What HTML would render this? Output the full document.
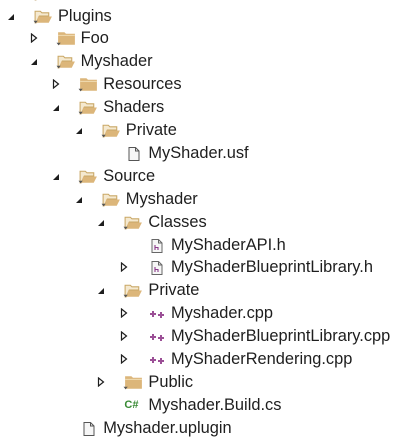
<!DOCTYPE html>
<html><head><style>
body{margin:0;width:408px;height:444px;background:#fff;position:relative;overflow:hidden;font-family:"Liberation Sans","Noto Sans CJK SC",sans-serif;font-size:16.4px;color:#1e1e1e}
.r{position:absolute;height:23px;line-height:23px;white-space:nowrap}
.r span{position:absolute;left:0}
.r svg{position:absolute}
</style></head><body>
<svg width="0" height="0" style="position:absolute">
<defs>
<symbol id="fo" viewBox="0 0 20 16"><path d="M2 3h5l1.5 1.5H15v3H6L3 14H2z" fill="#f5e9d0" stroke="#c9a765" stroke-width="1"/><path d="M5 8h13l-3 6H3z" fill="#dcb67a"/><path d="M0.5 12h4l-2 2.5z" fill="#555"/></symbol>
<symbol id="fc" viewBox="0 0 20 16"><path d="M2 2h6l1.5 1.5H18V14H2z" fill="#dcb67a"/><path d="M2 5h16" stroke="#f0dcb4" stroke-width="1"/><path d="M0.5 12h4l-2 2.5z" fill="#555"/></symbol>
<symbol id="doc" viewBox="0 0 16 16"><path d="M3 1.5h6.5l3.5 3.5v9.5H3z" fill="#f6f6f6" stroke="#555"/><path d="M9.5 1.5v3.5h3.5" fill="none" stroke="#555"/></symbol>
<symbol id="h" viewBox="0 0 16 16"><path d="M3 1.5h6.5l3.5 3.5v9.5H3z" fill="#f6f6f6" stroke="#666"/><path d="M9.5 1.5v3.5h3.5" fill="none" stroke="#666"/><path d="M6 7v5M6 9.5h3v2.5" fill="none" stroke="#8b3a8b" stroke-width="1.1"/></symbol>
<symbol id="cpp" viewBox="0 0 16 16"><path d="M1 8h6M4 5v6M9 9h6M12 6v6" stroke="#9b4f96" stroke-width="2"/></symbol>
<symbol id="ex" viewBox="0 0 8 8"><path d="M7 1V7H1z" fill="#1e1e1e"/></symbol>
<symbol id="co" viewBox="0 0 8 10"><path d="M1.5 1l5 4-5 4z" fill="#fff" stroke="#1e1e1e" stroke-width="1.2"/></symbol>
</defs></svg>
<div id="t"></div>
<script>
var rows=[
[-1,'','fo','',-1],
[0,'Plugins','fo','ex'],[1,'Foo','fc','co'],[1,'Myshader','fo','ex'],[2,'Resources','fc','co'],[2,'Shaders','fo','ex'],[3,'Private','fo','ex'],[4,'MyShader.usf','doc',''],[2,'Source','fo','ex'],[3,'Myshader','fo','ex'],[4,'Classes','fo','ex'],[5,'MyShaderAPI.h','h',''],[5,'MyShaderBlueprintLibrary.h','h','co'],[4,'Private','fo','ex'],[5,'Myshader.cpp','cpp','co'],[5,'MyShaderBlueprintLibrary.cpp','cpp','co'],[5,'MyShaderRendering.cpp','cpp','co'],[4,'Public','fc','co'],[4,'Myshader.Build.cs','cs',''],[2,'Myshader.uplugin','doc','']];
var h='';
rows.forEach(function(r,i){
 var lv=r[0]<0?0:r[0];var T=58+22.6*lv;var y=4.5+22.9*(i-1);
 h+='<div class="r" style="top:'+y+'px;left:0;width:408px">';
 if(r[3]=='ex')h+='<svg style="left:'+(T-51)+'px;top:8px" width="8" height="8"><use href="#ex"/></svg>';
 if(r[3]=='co')h+='<svg style="left:'+(T-51)+'px;top:6px" width="8" height="10"><use href="#co"/></svg>';
 if(r[2]=='cs')h+='<span style="left:'+(T-24)+'px;color:#388a34;font-size:11px;font-weight:bold">C#</span>';
 else if(r[2]=='fo'||r[2]=='fc')h+='<svg style="left:'+(T-25)+'px;top:3px" width="21" height="17"><use href="#'+r[2]+'"/></svg>';
 else h+='<svg style="left:'+(T-22)+'px;top:4px" width="16" height="16"><use href="#'+r[2]+'"/></svg>';
 h+='<span style="left:'+T+'px">'+r[1]+'</span></div>';
});
document.getElementById('t').innerHTML=h;
</script>
</body></html>
